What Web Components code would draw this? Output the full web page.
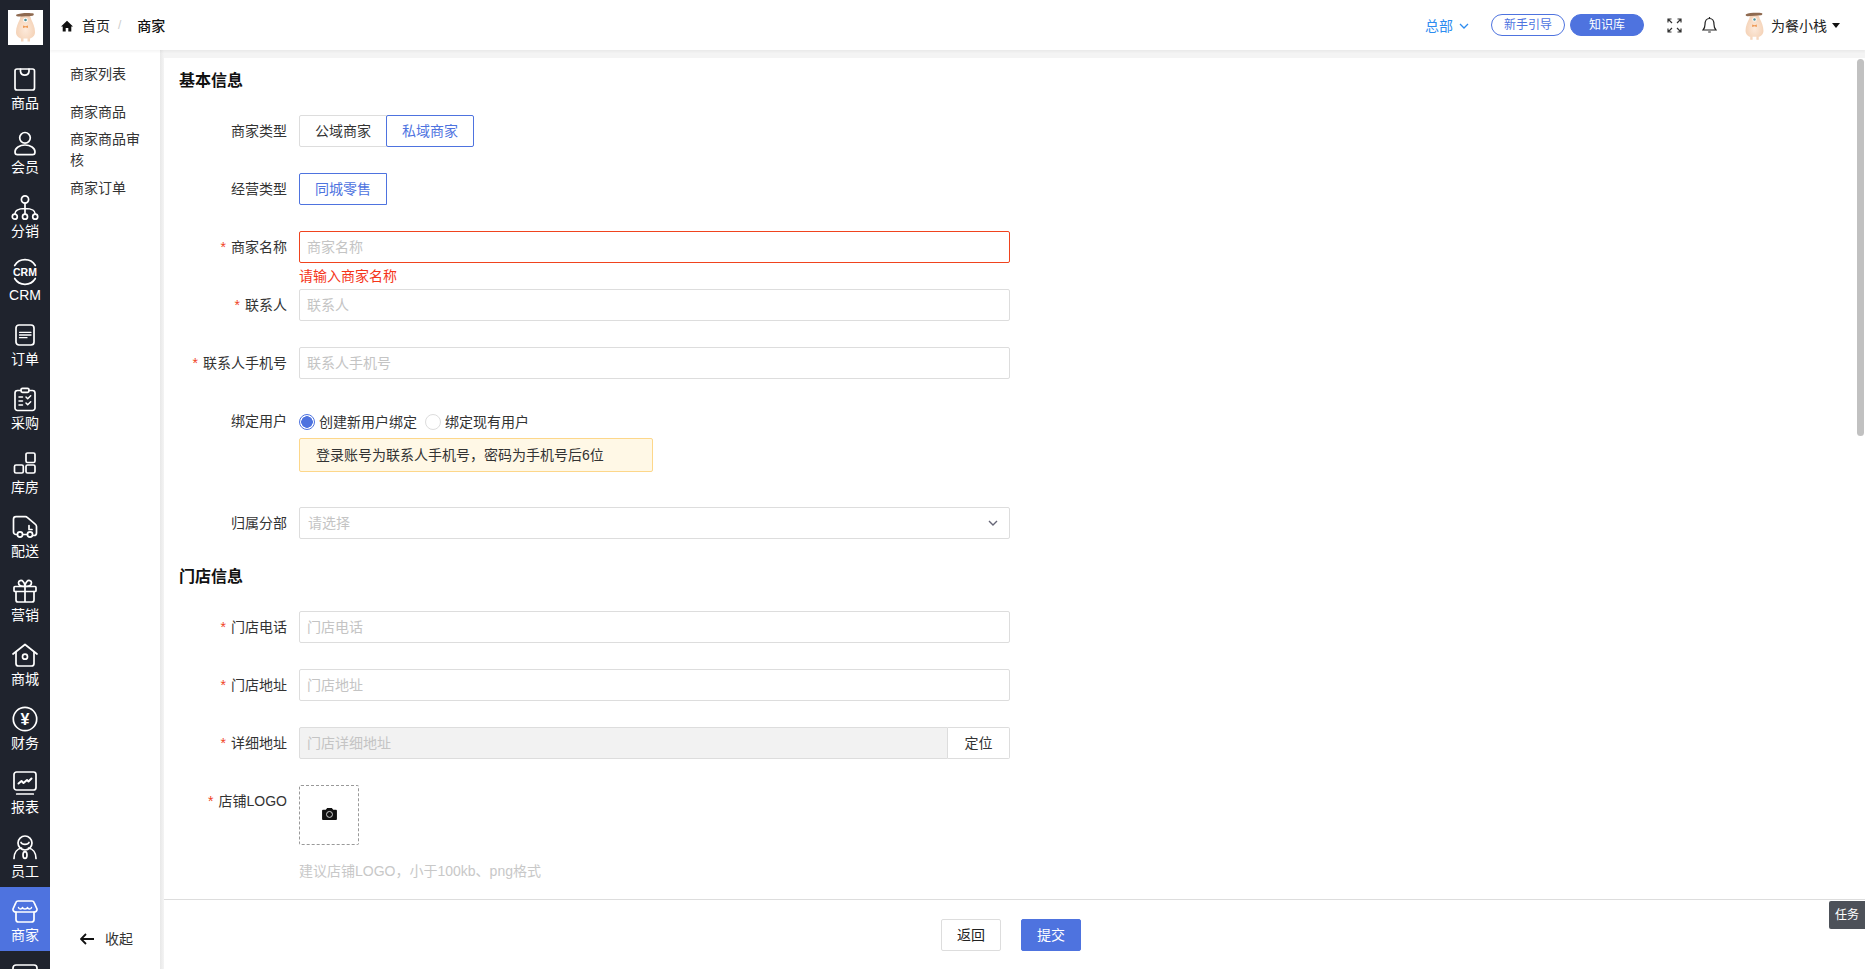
<!DOCTYPE html>
<html lang="zh-CN">
<head>
<meta charset="UTF-8" />
<title>商家</title>
<style>
  html, body { margin: 0; height: 100%; overflow: hidden; }
  body { font: 14px/20px "Liberation Sans", "Noto Sans CJK SC", sans-serif; color: #222; background: #f4f4f4; }
</style>
</head>
<body>
<merchant-app>
  <rail-nav slot="rail">
    <rail-item icon="goods">商品</rail-item>
    <rail-item icon="member">会员</rail-item>
    <rail-item icon="dist">分销</rail-item>
    <rail-item icon="crm">CRM</rail-item>
    <rail-item icon="order">订单</rail-item>
    <rail-item icon="purchase">采购</rail-item>
    <rail-item icon="store">库房</rail-item>
    <rail-item icon="truck">配送</rail-item>
    <rail-item icon="gift">营销</rail-item>
    <rail-item icon="mall">商城</rail-item>
    <rail-item icon="money">财务</rail-item>
    <rail-item icon="report">报表</rail-item>
    <rail-item icon="staff">员工</rail-item>
    <rail-item icon="shop" active>商家</rail-item>
    <rail-item icon="more"></rail-item>
  </rail-nav>
  <top-bar slot="top"></top-bar>
  <sub-menu slot="menu">
    <span class="first">商家列表</span>
    <span>商家商品</span>
    <span class="long">商家商品审核</span>
    <span>商家订单</span>
  </sub-menu>
  <merchant-form slot="main"></merchant-form>
</merchant-app>

<script>
// shared mascot, used for the logo and the avatar
const mascot = `
  <svg viewBox="0 0 35 35" width="100%" height="100%">
    <defs>
      <radialGradient id="skin" cx="50%" cy="55%" r="60%">
        <stop offset="0" stop-color="#fdeadb"/><stop offset="1" stop-color="#f3cfb2"/>
      </radialGradient>
    </defs>
    <path d="M12 9c0-3 2-4 5.500-4s5.500 1 5.500 4c2 4 4 8 4 13 0 4-3 6-5 6.500v3h-2.500v-3h-4v3H13v-3c-2-.5-5-2.500-5-6.500 0-5 2-9 4-13z" fill="url(#skin)"/>
    <path d="M8.500 4.500c3-1.500 13-2 17-1 .8.800 0 2-1 2.200-4 .6-10 .8-14.500.8-1.500 0-2.500-1-1.500-2z" fill="#8f6a50"/>
    <circle cx="17.500" cy="10" r="2.300" fill="#fff"/><circle cx="17.500" cy="10" r="1.300" fill="#4d8f96"/>
    <path d="M15 15.500l2.500.8 2.500-.8v2.500l-2.500-.8-2.500.8z" fill="#ee9a55"/>
  </svg>`;

const icons = {
  goods: '<rect x="4" y="2" width="19.500" height="21" rx="2"/><path d="M9.500 2v2.500a4.300 4.300 0 0 0 8.500 0V2"/>',
  member: '<circle cx="14" cy="6.800" r="5.300"/><path d="M14 14c-5.500 0-10 3-10 7 0 2 1 2.700 2.500 2.700h15c1.500 0 2.500-.7 2.500-2.700 0-4-4.500-7-10-7z"/>',
  dist: '<circle cx="14" cy="4.500" r="3.600"/><circle cx="3.800" cy="21.700" r="2.500"/><circle cx="14" cy="21.700" r="2.500"/><circle cx="24.200" cy="21.700" r="2.500"/><path d="M14 8.100v11M3.800 19.200c0-4 3-5.700 10.200-5.700s10.200 1.700 10.200 5.700"/>',
  crm: '<path d="M3.700 6.500A12 12 0 0 1 24.300 6.500M3.700 19.500A12 12 0 0 0 24.300 19.500"/><text x="14" y="16.800" text-anchor="middle" class="t" font-size="10.500">CRM</text>',
  order: '<rect x="5" y="2" width="18" height="20" rx="3"/><path d="M8.500 9.300h11.500M8.500 12h11.500M8.500 14.700h7.500" stroke-width="1.300"/>',
  purchase: '<path d="M10 3.500H6.500a2.500 2.500 0 0 0-2.500 2.500v15a2.500 2.500 0 0 0 2.500 2.500h15a2.500 2.500 0 0 0 2.500-2.500V6a2.500 2.500 0 0 0-2.500-2.500H18"/><rect x="10" y="1.300" width="8" height="4" rx="1.500"/><path d="M8 10h3.500M8 14h3.500M8 18h3.500M15 10l1.700 1.700 3-3M15 16l1.700 1.700 3-3" stroke-width="1.500"/>',
  store: '<rect x="15" y="2" width="9" height="9.500" rx="1.500"/><rect x="3.500" y="14" width="8.800" height="8" rx="1.500"/><rect x="15" y="14" width="9" height="8" rx="1.500"/>',
  truck: '<path d="M6.300 19.500H5a2.500 2.500 0 0 1-2.500-2.500V4.200A2.500 2.500 0 0 1 5 1.700h9.500c1 0 1.500.4 2 1l7.700 6.500c1 .8 1.300 1.300 1.300 2.300v6.500a2.500 2.500 0 0 1-2.500 2.500h-1.500M11.700 19.500h4.600"/><circle cx="9" cy="19.500" r="2.600"/><circle cx="19" cy="19.500" r="2.600"/><path d="M18 10.500v4h3"/>',
  gift: '<rect x="3" y="7.500" width="22" height="5" rx="1"/><path d="M5 12.500V21a2 2 0 0 0 2 2h14a2 2 0 0 0 2-2v-8.500M14 7.500V23M14 7.500C11 7.500 7.500 6.500 7.500 3.700 7.500 1.500 10.500.8 12 2.300c1.300 1.200 2 3 2 5.200zM14 7.500c3 0 6.500-1 6.500-3.800 0-2.200-3-2.900-4.500-1.400-1.300 1.200-2 3-2 5.200z"/>',
  mall: '<path d="M2 11L14 1.500 26 11"/><path d="M5 9v11.500A2.500 2.500 0 0 0 7.500 23h13a2.500 2.500 0 0 0 2.500-2.500V9"/><circle cx="14" cy="13.700" r="2.500"/>',
  money: '<circle cx="14" cy="12" r="11.700"/><text x="14" y="17.500" text-anchor="middle" class="t" font-size="16">¥</text>',
  report: '<rect x="3" y="1" width="22" height="18" rx="2.500"/><path d="M5.700 23h16.600"/><path d="M7.500 12.500l3-2.500 2 2 3.500-3 1.500 1.500 3-3" stroke-width="2"/>',
  staff: '<circle cx="14" cy="8" r="7"/><path d="M10 7.500c1 2.500 7 2.500 8 0"/><path d="M3 23.500c0-6 3.500-9.700 7.500-10.500M25 23.500c0-6-3.500-9.700-7.500-10.500"/><ellipse cx="14" cy="20" rx="2" ry="3.400"/>',
  shop: '<path d="M5 13v7.500A2.500 2.500 0 0 0 7.500 23h13a2.500 2.500 0 0 0 2.500-2.500V13"/><path d="M7 2h14c1 0 1.700.5 2 1.300l3 6.700c.3 1.500-1 3-3 3H5c-2 0-3.300-1.500-3-3l3-6.700C5.300 2.500 6 2 7 2z"/><path d="M7.500 8.500c.3 2 3.500 2 4 0 .5 2 4.500 2 5 0 .5 2 3.700 2 4 0" stroke-width="1.500"/>',
  more: '<rect x="2" y="2" width="24" height="20" rx="3"/>'
};

class MerchantApp extends HTMLElement {
  constructor() {
    super();
    this.attachShadow({ mode: 'open' });
    this.shadowRoot.innerHTML = `
      <style>
        :host { display: grid; grid-template-columns: 50px 110px 1fr; grid-template-rows: 50px 1fr; height: 100vh; }
        .rail { grid-column: 1; grid-row: 1 / 3; min-height: 0; overflow: hidden; }
        .top { grid-column: 2 / 4; grid-row: 1; position: relative; z-index: 2; }
        .menu { grid-column: 2; grid-row: 2; min-height: 0; }
        .main { grid-column: 3; grid-row: 2; min-height: 0; display: flex; padding: 8px 0 0 4px;
                background: linear-gradient(90deg, #e8e8e8, #f4f4f4 4px); }
      </style>
      <div class="rail"><slot name="rail"></slot></div>
      <div class="top"><slot name="top"></slot></div>
      <div class="menu"><slot name="menu"></slot></div>
      <div class="main"><slot name="main"></slot></div>`;
  }
}

class RailNav extends HTMLElement {
  constructor() {
    super();
    this.attachShadow({ mode: 'open' });
    this.shadowRoot.innerHTML = `
      <style>
        :host { display: block; height: 100%; background: #1f232d; overflow: hidden; }
        .logo { width: 35px; height: 35px; margin: 10px 0 10px 8px; background: #fff; }
      </style>
      <div class="logo">${mascot}</div>
      <slot></slot>`;
  }
}

class RailItem extends HTMLElement {
  constructor() {
    super();
    this.attachShadow({ mode: 'open' });
  }
  connectedCallback() {
    this.shadowRoot.innerHTML = `
      <style>
        :host { display: flex; flex-direction: column; align-items: center; height: 64px; padding-top: 12px;
                box-sizing: border-box; color: #fff; }
        :host([active]) { background: #4e73df; }
        svg { width: 28px; height: 26px; flex: none; fill: none; stroke: #fff; stroke-width: 1.700;
              stroke-linecap: round; stroke-linejoin: round; overflow: visible; }
        .t { fill: #fff; stroke: none; font-family: "Liberation Sans", sans-serif; font-weight: 700; }
      </style>
      <svg viewBox="0 0 28 26">${icons[this.getAttribute('icon')]}</svg>
      <slot></slot>`;
  }
}

class TopBar extends HTMLElement {
  constructor() {
    super();
    this.attachShadow({ mode: 'open' });
    this.shadowRoot.innerHTML = `
      <style>
        :host { display: flex; align-items: center; height: 50px; background: #fff; padding-left: 11px;
                box-shadow: 0 2px 2px rgba(0,0,0,.04); box-sizing: border-box; }
        svg { display: block; flex: none; }
        .home { width: 12px; height: 12px; margin-top: 2px; margin-right: 9px; }
        .crumb { margin-top: 1px; }
        .sep { color: #ccc; margin: 0 16px 0 8px; font-size: 12px; }
        b { font-weight: 500; color: #111; }
        .right { margin-left: auto; display: flex; align-items: center; }
        .org { color: #2d8cf0; margin-top: 1px; }
        .chev { width: 10px; height: 6px; margin: 2px 0 0 6px; }
        .pill { width: 74px; height: 22px; line-height: 20px; border: 1px solid #4e73df; border-radius: 11px; box-sizing: border-box;
                text-align: center; font-size: 12px; color: #4e73df; }
        .pill.on { background: #4e73df; color: #fff; margin-left: 5px; }
        .guide { margin-left: 22px; }
        .full { width: 15px; height: 15px; margin-left: 23px; }
        .bell { width: 15px; height: 18px; margin: -1px 0 0 20px; }
        .avatar { width: 33px; height: 33px; margin: 2px 0 0 21px; }
        .user { margin-top: 1px; }
        .caret { width: 0; height: 0; border: 4px solid transparent; border-top: 5px solid #111; border-bottom: 0; margin: 0 25px 0 5px; }
      </style>
      <svg class="home" viewBox="0 0 12 12"><path d="M6 .8L0 6.400h1.700V11.500h3V8h2.600v3.500h3V6.400H12z" fill="#111"/></svg>
      <span class="crumb">首页</span><span class="sep">/</span><b class="crumb">商家</b>
      <div class="right">
        <span class="org">总部</span>
        <svg class="chev" viewBox="0 0 10 6"><path d="M1 1l4 4 4-4" fill="none" stroke="#2d8cf0" stroke-width="1.300"/></svg>
        <div class="pill guide">新手引导</div>
        <div class="pill on">知识库</div>
        <svg class="full" viewBox="0 0 15 15" fill="none" stroke="#333" stroke-width="1.200">
          <path d="M1 4.500V1h3.500M1 1l4 4M14 4.500V1h-3.500M14 1l-4 4M1 10.500V14h3.500M1 14l4-4M14 10.500V14h-3.500M14 14l-4-4"/>
        </svg>
        <svg class="bell" viewBox="0 0 15 18" fill="none" stroke="#222" stroke-width="1.200">
          <path d="M1 14h13c-1.300-1.300-2-2-2-5.500C12 5 10.500 2.500 7.500 2.500S3 5 3 8.500C3 12 2.300 12.700 1 14z"/>
          <path d="M7.500 1v1.500M6.200 16h2.600" />
        </svg>
        <div class="avatar">${mascot}</div>
        <span class="user">为餐小栈</span>
        <span class="caret"></span>
      </div>`;
  }
}

class SubMenu extends HTMLElement {
  constructor() {
    super();
    this.attachShadow({ mode: 'open' });
    this.shadowRoot.innerHTML = `
      <style>
        :host { display: flex; flex-direction: column; height: 100%; box-sizing: border-box; background: #fff;
                padding: 14px 16px 20px 20px; color: #333; }
        .list { display: flex; flex-direction: column; gap: 7px; }
        ::slotted(span) { display: block; }
        ::slotted(.first) { margin-bottom: 11px; }
        ::slotted(.long) { line-height: 21px; }
        .fold { margin-top: auto; display: flex; align-items: center; padding-left: 10px; color: #333; }
        svg { width: 14px; height: 12px; margin-right: 11px; }
      </style>
      <div class="list"><slot></slot></div>
      <div class="fold">
        <svg viewBox="0 0 14 12" fill="none" stroke="#111" stroke-width="1.800"><path d="M6 1L1 6l5 5M1 6h13"/></svg>
        <span>收起</span>
      </div>`;
  }
}

class FormRow extends HTMLElement {
  constructor() {
    super();
    this.attachShadow({ mode: 'open' });
  }
  connectedCallback() {
    const star = this.hasAttribute('required') ? '<i>*</i>' : '';
    const error = this.getAttribute('error');
    this.shadowRoot.innerHTML = `
      <style>
        :host { display: flex; margin-bottom: 26px; }
        label { width: 108px; padding-right: 12px; text-align: right; line-height: 32px; flex: none; color: #333; }
        i { color: #f0431e; font-style: normal; margin-right: 5px; }
        .box { position: relative; width: 711px; }
        .err { position: absolute; left: 0; top: 35px; color: #f5351a; line-height: 20px; }
      </style>
      <label>${star}${this.getAttribute('label')}</label>
      <div class="box"><slot></slot>${error ? `<div class="err">${error}</div>` : ''}</div>`;
  }
}

class TextField extends HTMLElement {
  constructor() {
    super();
    this.attachShadow({ mode: 'open' });
  }
  connectedCallback() {
    this.shadowRoot.innerHTML = `
      <style>
        :host { display: flex; align-items: center; justify-content: space-between; height: 32px; box-sizing: border-box;
                border: 1px solid #ddd; border-radius: 2px; padding: 0 7px; color: #c4c4c4; background: #fff; flex: 1; }
        :host([invalid]) { border-color: #f0431e; }
        :host([disabled]) { background: #f2f2f2; border-radius: 2px 0 0 2px; }
        :host([select]) { padding-left: 8px; padding-right: 11px; }
        svg { width: 10px; height: 6px; display: block; }
      </style>
      <span>${this.getAttribute('placeholder')}</span>
      ${this.hasAttribute('select') ? '<svg viewBox="0 0 10 6"><path d="M1 1l4 4 4-4" fill="none" stroke="#667" stroke-width="1.400"/></svg>' : ''}`;
  }
}

class SegGroup extends HTMLElement {
  constructor() {
    super();
    this.attachShadow({ mode: 'open' });
    this.shadowRoot.innerHTML = `
      <style>
        :host { display: flex; }
        ::slotted(span) { display: block; width: 88px; height: 32px; line-height: 30px; text-align: center; box-sizing: border-box;
                          border: 1px solid #ddd; color: #333; }
        ::slotted(span:first-child) { border-radius: 2px 0 0 2px; }
        ::slotted(span:not(:first-child)) { margin-left: -1px; }
        ::slotted(.on) { border-color: #4e73df; color: #4e73df; border-radius: 2px; position: relative; }
      </style>
      <slot></slot>`;
  }
}

class MerchantForm extends HTMLElement {
  constructor() {
    super();
    this.attachShadow({ mode: 'open' });
    this.shadowRoot.innerHTML = `
      <style>
        :host { display: flex; flex-direction: column; flex: 1; min-width: 0; background: #fff; position: relative; font-size: 14px; }
        .scroll { flex: 1; min-height: 0; overflow: hidden; padding: 11px 15px 0; }
        h3 { margin: 0 0 23px; padding-top: 1px; font-size: 16px; line-height: 22px; font-weight: 700; color: #111; }
        .thumb { position: absolute; right: 1px; top: 1px; width: 7px; height: 377px; border-radius: 4px; background: #c1c1c1; }
        .radios { display: flex; align-items: center; height: 33px; color: #333; }
        .radio { width: 16px; height: 16px; border-radius: 50%; border: 1px solid #ddd; box-sizing: border-box; margin-right: 4px; flex: none; }
        .radio.on { border-color: #4e73df; background: radial-gradient(circle, #4e73df 0 5.500px, #fff 6px); }
        .radios span + .radio { margin-left: 8px; }
        .alert { width: 354px; height: 34px; line-height: 32px; box-sizing: border-box; margin-bottom: 35px;
                 padding-left: 16px; border: 1px solid #fdd78a; border-radius: 2px; background: #fff8e6; color: #333; }
        .bindbox { margin-bottom: 0; }
        .group { display: flex; }
        .addon { width: 62px; height: 32px; line-height: 30px; box-sizing: border-box; text-align: center; color: #333; flex: none;
                 border: 1px solid #ddd; border-left: 0; border-radius: 0 2px 2px 0; }
        .upload { width: 60px; height: 60px; box-sizing: border-box; border: 1px dashed #999; border-radius: 2px;
                  display: flex; align-items: center; justify-content: center; padding-bottom: 4px; }
        .upload svg { width: 15px; height: 13px; display: block; }
        .hint { margin-top: 16px; color: #c8c8c8; }
        .logo-row { margin-bottom: 0; }
        .foot { height: 70px; box-sizing: border-box; border-top: 1px solid #ddd; background: #fff; padding: 19px 7px 0 0;
                display: flex; justify-content: center; gap: 20px; }
        .btn { width: 60px; height: 32px; line-height: 30px; box-sizing: border-box; text-align: center; border: 1px solid #ddd; border-radius: 2px; color: #222; }
        .btn.primary { background: #4e73df; border-color: #4e73df; color: #fff; }
        .task { position: absolute; right: 0; top: 843px; width: 36px; height: 28px; line-height: 28px; text-align: center;
                font-size: 12px; background: #4d5159; color: #fff; border-radius: 2px 0 0 2px; }
      </style>
      <div class="scroll">
        <h3>基本信息</h3>
        <form-row label="商家类型"><seg-group><span>公域商家</span><span class="on">私域商家</span></seg-group></form-row>
        <form-row label="经营类型"><seg-group><span class="on">同城零售</span></seg-group></form-row>
        <form-row label="商家名称" required error="请输入商家名称"><text-field invalid placeholder="商家名称"></text-field></form-row>
        <form-row label="联系人" required><text-field placeholder="联系人"></text-field></form-row>
        <form-row label="联系人手机号" required><text-field placeholder="联系人手机号"></text-field></form-row>
        <form-row label="绑定用户" class="bindbox">
          <div class="radios">
            <div class="radio on"></div><span>创建新用户绑定</span>
            <div class="radio"></div><span>绑定现有用户</span>
          </div>
          <div class="alert">登录账号为联系人手机号，密码为手机号后6位</div>
        </form-row>
        <form-row label="归属分部"><text-field select placeholder="请选择"></text-field></form-row>
        <h3>门店信息</h3>
        <form-row label="门店电话" required><text-field placeholder="门店电话"></text-field></form-row>
        <form-row label="门店地址" required><text-field placeholder="门店地址"></text-field></form-row>
        <form-row label="详细地址" required>
          <div class="group"><text-field disabled placeholder="门店详细地址"></text-field><div class="addon">定位</div></div>
        </form-row>
        <form-row label="店铺LOGO" required class="logo-row">
          <div class="upload">
            <svg viewBox="0 0 16 14"><path d="M0 4a1 1 0 0 1 1-1h3l1.500-2h5L12 3h3a1 1 0 0 1 1 1v9a1 1 0 0 1-1 1H1a1 1 0 0 1-1-1z" fill="#111"/><circle cx="8" cy="8" r="3.200" fill="none" stroke="#ddd" stroke-width="1"/></svg>
          </div>
          <div class="hint">建议店铺LOGO，小于100kb、png格式</div>
        </form-row>
      </div>
      <div class="foot"><div class="btn">返回</div><div class="btn primary">提交</div></div>
      <div class="thumb"></div>
      <div class="task">任务</div>`;
  }
}

customElements.define('merchant-app', MerchantApp);
customElements.define('rail-nav', RailNav);
customElements.define('rail-item', RailItem);
customElements.define('top-bar', TopBar);
customElements.define('sub-menu', SubMenu);
customElements.define('form-row', FormRow);
customElements.define('text-field', TextField);
customElements.define('seg-group', SegGroup);
customElements.define('merchant-form', MerchantForm);
</script>
</body>
</html>
